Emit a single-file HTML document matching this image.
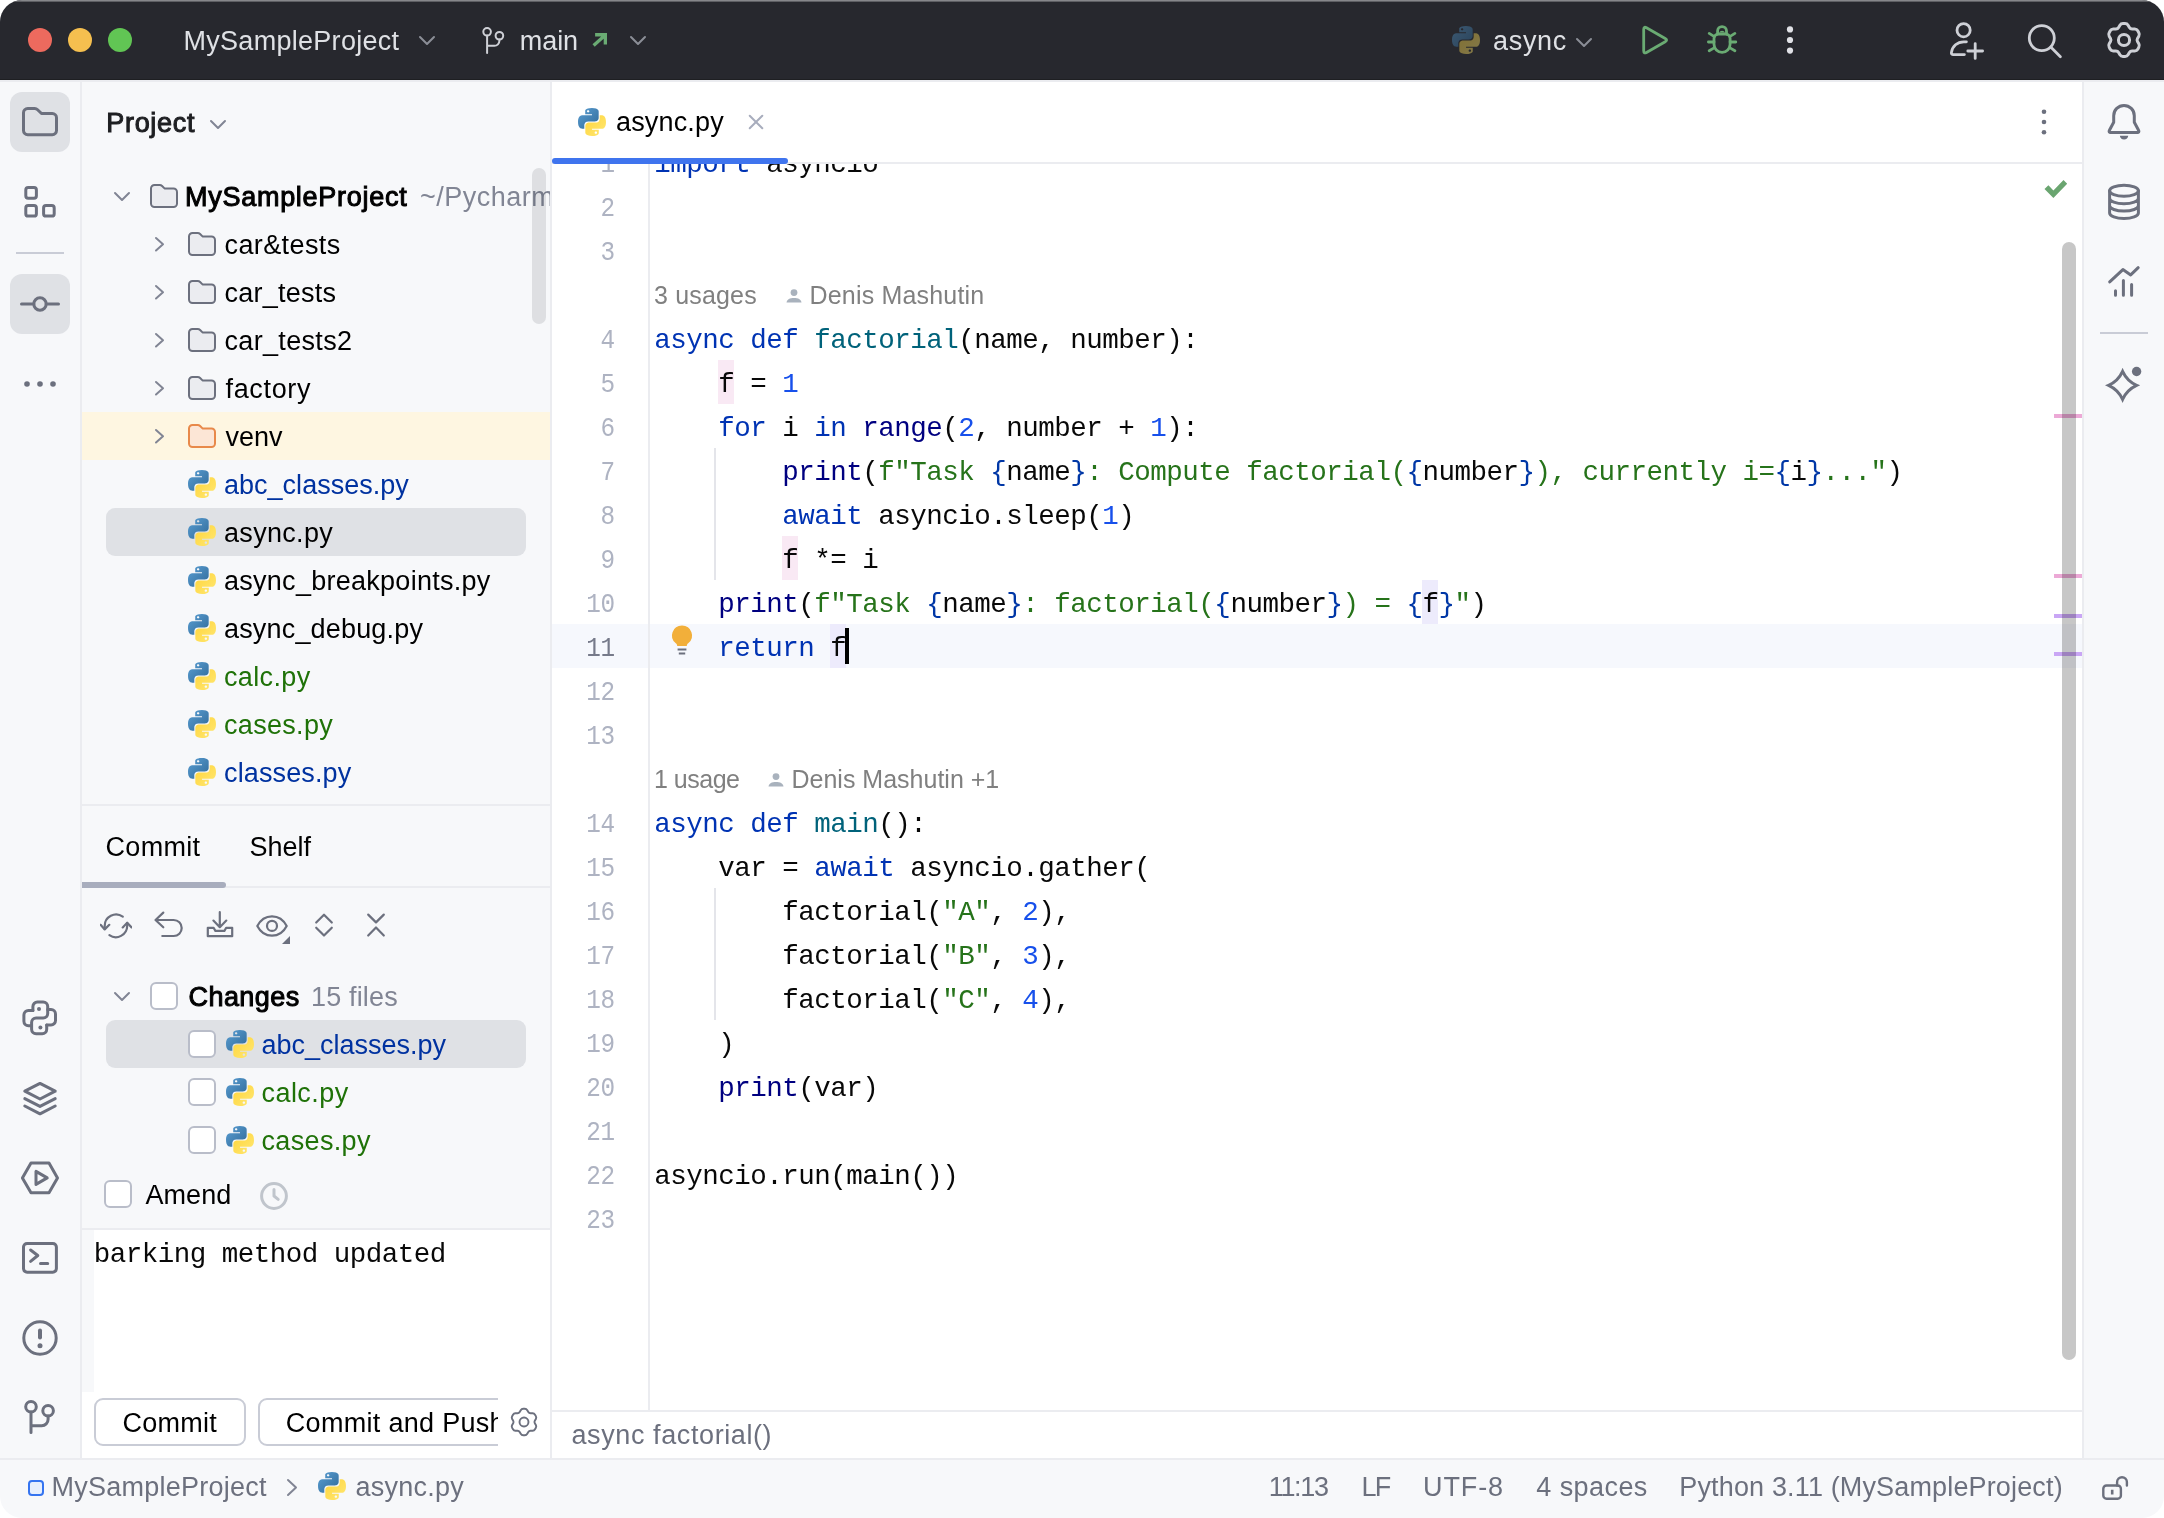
<!DOCTYPE html>
<html lang="en"><head><meta charset="utf-8"><title>MySampleProject – async.py</title>
<style>
html,body{margin:0;padding:0;background:#fff}
body{width:2164px;height:1518px;overflow:hidden;position:relative}
#win{position:absolute;left:0;top:0;width:2164px;height:1518px;border-radius:22px;overflow:hidden;background:#F7F8FA;will-change:transform}
.a{position:absolute}
.t{font-family:"Liberation Sans",sans-serif;white-space:pre;line-height:40px;height:40px}
.m{font-family:"Liberation Mono",monospace;white-space:pre;font-size:27.5px;letter-spacing:-0.5px;line-height:44px;height:44px;color:#080808}
.ln{font-family:"Liberation Mono",monospace;font-size:27px;letter-spacing:-0.2px;line-height:44px;height:44px;color:#AEB3C2;text-align:right;width:64px;transform:scaleX(0.9);transform-origin:100% 50%}
.k{color:#0033B3}.b{color:#000080}.f{color:#00627A}.n{color:#1750EB}.s{color:#26731A}.c{color:#0037A6}
.hw{background:#FCE8F4}.hr{background:#EDEBFC}
</style></head>
<body>
<svg width="0" height="0" style="position:absolute"><defs><linearGradient id="pyb" x1="0" y1="0" x2="1" y2="1"><stop offset="0" stop-color="#5A9FD4"/><stop offset="1" stop-color="#306998"/></linearGradient><linearGradient id="pyy" x1="0" y1="0" x2="1" y2="1"><stop offset="0" stop-color="#FFD43B"/><stop offset="1" stop-color="#FFE873"/></linearGradient></defs></svg>
<div id="win">
<div class="a" style="left:0px;top:0px;width:2164px;height:80px;background:#27282E;border-bottom:0"></div>
<div class="a" style="left:0px;top:0px;width:2164px;height:2px;background:linear-gradient(#9a9b9e,#4a4b50);"></div>
<div class="a" style="left:0px;top:79px;width:2164px;height:1px;background:#1E1F22;"></div>
<div class="a" style="left:28px;top:28px;width:24px;height:24px;background:#ED6A5E;border-radius:50%"></div>
<div class="a" style="left:68px;top:28px;width:24px;height:24px;background:#F5BF4F;border-radius:50%"></div>
<div class="a" style="left:108px;top:28px;width:24px;height:24px;background:#61C554;border-radius:50%"></div>
<div id="t_proj" class="a t" style="left:183.5px;top:21.2px;font-size:27px;color:#DFE1E5;letter-spacing:0.285px">MySampleProject</div>
<svg class="a" style="left:417.5px;top:35.0px" width="18" height="11" viewBox="-2 -2 18 11" fill="none" ><path d="M0 0L7.0 7L14 0" stroke="#8B8E97" stroke-width="2" stroke-linecap="round" stroke-linejoin="round"/></svg>
<svg class="a" style="left:478px;top:24px" width="32" height="36" viewBox="0 0 32 36" fill="none" ><circle cx="9.100" cy="7.800" r="3.800" stroke="#CED0D6" stroke-width="2" stroke-linecap="round" stroke-linejoin="round"/><circle cx="21.400" cy="11.750" r="3.800" stroke="#CED0D6" stroke-width="2" stroke-linecap="round" stroke-linejoin="round"/><path d="M9.100 11.600V29M9.100 21.850h7.300a5 5 0 0 0 5-5v-1.300" stroke="#CED0D6" stroke-width="2" stroke-linecap="round" stroke-linejoin="round"/></svg>
<div id="t_main" class="a t" style="left:519.8px;top:21.2px;font-size:27px;color:#DFE1E5;letter-spacing:-0.065px">main</div>
<svg class="a" style="left:590px;top:28px" width="20" height="20" viewBox="0 0 20 20" fill="none" ><path d="M3.600 17.400L14.200 7.900M5.100 6.750H15.350V16.500" stroke="#6AAB73" stroke-width="3.300" stroke-linejoin="miter"/></svg>
<svg class="a" style="left:629.0px;top:34.7px" width="18" height="11" viewBox="-2 -2 18 11" fill="none" ><path d="M0 0L7.0 7L14 0" stroke="#8B8E97" stroke-width="2" stroke-linecap="round" stroke-linejoin="round"/></svg>
<svg class="a" style="left:1450px;top:24px" width="32" height="32" viewBox="0 0 16 16" fill="none" opacity="0.42"><path fill="url(#pyb)" d="M7.93 1C4.39 1 4.61 2.53 4.61 2.53l.004 1.59h3.38v.48H3.27S1 4.34 1 7.9c0 3.57 1.98 3.44 1.98 3.44h1.18V9.68s-.06-1.98 1.95-1.98h3.35s1.88.03 1.88-1.82V2.83S11.63 1 7.93 1zM6.07 2.07c.34 0 .61.27.61.61s-.27.61-.61.61-.61-.27-.61-.61.27-.61.61-.61z"/><path fill="url(#pyy)" d="M8.07 15c3.54 0 3.32-1.53 3.32-1.53l-.004-1.59H8.01v-.48h4.72S15 11.66 15 8.1c0-3.57-1.98-3.44-1.98-3.44h-1.18v1.66s.06 1.98-1.95 1.98H6.54s-1.88-.03-1.88 1.82v3.05S4.37 15 8.07 15zm1.86-1.07c-.34 0-.61-.27-.61-.61s.27-.61.61-.61.61.27.61.61-.27.61-.61.61z"/></svg>
<div id="t_async" class="a t" style="left:1493.0px;top:21.2px;font-size:27px;color:#DFE1E5;letter-spacing:0.700px">async</div>
<svg class="a" style="left:1575.0px;top:36.5px" width="18" height="11" viewBox="-2 -2 18 11" fill="none" ><path d="M0 0L7.0 7L14 0" stroke="#8B8E97" stroke-width="2" stroke-linecap="round" stroke-linejoin="round"/></svg>
<svg class="a" style="left:1634px;top:20px" width="40" height="40" viewBox="0 0 20 20" fill="none" ><path d="M4.85 4.70Q4.85 3.10 6.24 3.89L15.61 9.26Q17.00 10.05 15.61 10.84L6.24 16.21Q4.85 17.00 4.85 15.40z" stroke="#6AAB73" stroke-width="1.4" stroke-linejoin="round"/></svg>
<svg class="a" style="left:1702px;top:20px" width="40" height="40" viewBox="0 0 20 20" fill="none" ><path d="M6 9.300a2.300 2.300 0 0 1 2.300-2.300h3.450a2.300 2.300 0 0 1 2.300 2.300v2.825a4.025 4.025 0 0 1-8.050 0z" stroke="#6AAB73" stroke-width="1.4" stroke-linecap="round" stroke-linejoin="round"/><path d="M7.800 7V5.500a2.225 2.225 0 0 1 4.450 0V7" stroke="#6AAB73" stroke-width="1.4" stroke-linecap="round" stroke-linejoin="round"/><path d="M8.600 6.300a1.500 1.300 0 0 1 2.850 0z" fill="#6AAB73"/><path d="M3.200 11H6M14.050 11h2.850M3.600 6.700l2.600 1.600M16.450 6.700l-2.600 1.600M3.600 15.400l2.700-1.600M16.450 15.400l-2.700-1.600" stroke="#6AAB73" stroke-width="1.4" stroke-linecap="round" stroke-linejoin="round"/></svg>
<svg class="a" style="left:1785px;top:20px" width="10" height="40" viewBox="0 0 10 40" fill="none" ><circle cx="5" cy="9.4" r="3.1" fill="#E0E1E6"/><circle cx="5" cy="20.0" r="3.1" fill="#E0E1E6"/><circle cx="5" cy="30.6" r="3.1" fill="#E0E1E6"/></svg>
<svg class="a" style="left:1947.2px;top:20px" width="40" height="40" viewBox="0 0 20 20" fill="none" ><circle cx="8.300" cy="5.100" r="3.300" stroke="#CED0D6" stroke-width="1.4" stroke-linecap="round" stroke-linejoin="round"/><path d="M9.700 10.900H8.400c-3.300 0-5.700 2.200-6.200 5.400-.1.600.3 1 .9 1h5.600" stroke="#CED0D6" stroke-width="1.4" stroke-linecap="round" stroke-linejoin="round"/><path d="M14.100 11.800v7.400M10.400 15.500h7.400" stroke="#CED0D6" stroke-width="1.4" stroke-linecap="round" stroke-linejoin="round"/></svg>
<svg class="a" style="left:2024px;top:20px" width="40" height="40" viewBox="0 0 20 20" fill="none" ><circle cx="8.900" cy="9.050" r="6.250" stroke="#CED0D6" stroke-width="1.4" stroke-linecap="round" stroke-linejoin="round"/><path d="M13.500 13.650l4.700 4.700" stroke="#CED0D6" stroke-width="1.4" stroke-linecap="round" stroke-linejoin="round"/></svg>
<svg class="a" style="left:2104.0px;top:20.0px" width="40" height="40" viewBox="0 0 20 20" fill="none" ><path d="M7.96 2.62Q8.47 1.75 9.47 1.75L10.53 1.75Q11.53 1.75 12.04 2.62L12.70 3.76Q13.15 4.54 14.05 4.54L15.38 4.54Q16.38 4.55 16.88 5.41L17.41 6.34Q17.91 7.20 17.41 8.07L16.75 9.22Q16.30 10.00 16.75 10.78L17.41 11.93Q17.91 12.80 17.41 13.66L16.88 14.59Q16.38 15.45 15.38 15.46L14.05 15.46Q13.15 15.46 12.70 16.24L12.04 17.38Q11.53 18.25 10.53 18.25L9.47 18.25Q8.47 18.25 7.96 17.38L7.30 16.24Q6.85 15.46 5.95 15.46L4.62 15.46Q3.62 15.45 3.12 14.59L2.59 13.66Q2.09 12.80 2.59 11.93L3.25 10.78Q3.70 10.00 3.25 9.22L2.59 8.07Q2.09 7.20 2.59 6.34L3.12 5.41Q3.62 4.55 4.62 4.54L5.95 4.54Q6.85 4.54 7.30 3.76z" stroke="#CED0D6" stroke-width="1.5" stroke-linecap="round" stroke-linejoin="round"/><circle cx="10" cy="10" r="2.800" stroke="#CED0D6" stroke-width="1.5" stroke-linecap="round" stroke-linejoin="round"/></svg>
<div class="a" style="left:0px;top:80px;width:2164px;height:2px;background:#EBECF0;"></div>
<div class="a" style="left:80px;top:82px;width:2px;height:1376px;background:#EBECF0;"></div>
<div class="a" style="left:10px;top:92px;width:60px;height:60px;background:#DFE1E5;border-radius:12px"></div>
<svg class="a" style="left:20px;top:102px" width="40" height="40" viewBox="0 0 20 20" fill="none" ><path d="M1.75 5.35a2.1 2.1 0 0 1 2.1-2.1h3.5a2.1 2.1 0 0 1 1.45.6l1.95 1.9h5.4a2.1 2.1 0 0 1 2.1 2.1v6.4a2.1 2.1 0 0 1-2.1 2.1H3.85a2.1 2.1 0 0 1-2.1-2.1z" stroke="#6C707E" stroke-width="1.5" stroke-linecap="round" stroke-linejoin="round"/></svg>
<svg class="a" style="left:20px;top:182px" width="40" height="40" viewBox="0 0 20 20" fill="none" ><rect x="2.9" y="2.8" width="5.3" height="5.3" rx="1.2" stroke="#6C707E" stroke-width="1.5" stroke-linecap="round" stroke-linejoin="round"/><rect x="2.9" y="11.750" width="5.3" height="5.3" rx="1.2" stroke="#6C707E" stroke-width="1.5" stroke-linecap="round" stroke-linejoin="round"/><rect x="11.8" y="11.750" width="5.3" height="5.3" rx="1.2" stroke="#6C707E" stroke-width="1.5" stroke-linecap="round" stroke-linejoin="round"/></svg>
<div class="a" style="left:16px;top:252px;width:48px;height:2px;background:#C9CCD6;"></div>
<div class="a" style="left:10px;top:274px;width:60px;height:60px;background:#DFE1E5;border-radius:12px"></div>
<svg class="a" style="left:20px;top:284px" width="40" height="40" viewBox="0 0 20 20" fill="none" ><circle cx="10" cy="10" r="3.1" stroke="#6C707E" stroke-width="1.5" stroke-linecap="round" stroke-linejoin="round"/><path d="M0.75 10H6.9M13.1 10H19.25" stroke="#6C707E" stroke-width="1.5" stroke-linecap="round" stroke-linejoin="round"/></svg>
<svg class="a" style="left:20px;top:364px" width="40" height="40" viewBox="0 0 20 20" fill="none" ><circle cx="3.5" cy="10" r="1.4" fill="#6C707E"/><circle cx="10" cy="10" r="1.4" fill="#6C707E"/><circle cx="16.5" cy="10" r="1.4" fill="#6C707E"/></svg>
<svg class="a" style="left:20px;top:998px" width="40" height="40" viewBox="0 0 20 20" fill="none" ><path d="M6.450 6.200V4.300a2.250 2.250 0 0 1 2.250-2.250h2.900a2.250 2.250 0 0 1 2.250 2.250v3.450a2.250 2.250 0 0 1-2.250 2.250H8.050a2.250 2.250 0 0 0-2.250 2.250v3.350a2.250 2.250 0 0 0 2.250 2.250h3.050a2.250 2.250 0 0 0 2.250-2.250v-2.150" stroke="#6C707E" stroke-width="1.5" stroke-linecap="round" stroke-linejoin="round"/><path d="M6.450 6.200H4.200a2.250 2.250 0 0 0-2.250 2.250v3.200a2.250 2.250 0 0 0 2.250 2.250h1.600M13.850 5.750h1.650a2.250 2.250 0 0 1 2.250 2.250v3.200a2.250 2.250 0 0 1-2.250 2.250h-2.150" stroke="#6C707E" stroke-width="1.5" stroke-linecap="round" stroke-linejoin="round"/><circle cx="9.500" cy="5.450" r="1" fill="#6C707E"/><circle cx="10.200" cy="14.750" r="1" fill="#6C707E"/></svg>
<svg class="a" style="left:20px;top:1078px" width="40" height="40" viewBox="0 0 20 20" fill="none" ><path d="M10 2.7L17.6 6.6 10 10.5 2.4 6.6z" stroke="#6C707E" stroke-width="1.5" stroke-linecap="round" stroke-linejoin="round"/><path d="M2.4 10.3L10 14.2l7.600-3.900M2.4 14.000L10 17.900l7.600-3.900" stroke="#6C707E" stroke-width="1.5" stroke-linecap="round" stroke-linejoin="round"/></svg>
<svg class="a" style="left:20px;top:1158px" width="40" height="40" viewBox="0 0 20 20" fill="none" ><path d="M5.500 2.500h9l4.250 7.450-4.250 7.400h-9L1.200 9.950z" stroke="#6C707E" stroke-width="1.5" stroke-linecap="round" stroke-linejoin="round"/><path d="M8 6.700v6.500l5.600-3.250z" stroke="#6C707E" stroke-width="1.5" stroke-linecap="round" stroke-linejoin="round"/></svg>
<svg class="a" style="left:20px;top:1238px" width="40" height="40" viewBox="0 0 20 20" fill="none" ><rect x="1.750" y="2.750" width="16.450" height="14.350" rx="1.800" stroke="#6C707E" stroke-width="1.5" stroke-linecap="round" stroke-linejoin="round"/><path d="M5.300 6l3.600 2.750-3.600 2.900M10.250 12.700h3.600" stroke="#6C707E" stroke-width="1.5" stroke-linecap="round" stroke-linejoin="round"/></svg>
<svg class="a" style="left:20px;top:1318px" width="40" height="40" viewBox="0 0 20 20" fill="none" ><circle cx="10" cy="10" r="8.100" stroke="#6C707E" stroke-width="1.5" stroke-linecap="round" stroke-linejoin="round"/><path d="M10 6.200v3.550" stroke="#6C707E" stroke-width="2" stroke-linecap="round" stroke-linejoin="round"/><circle cx="10" cy="13.900" r="1.250" fill="#6C707E"/></svg>
<svg class="a" style="left:20px;top:1398px" width="40" height="40" viewBox="0 0 20 20" fill="none" ><circle cx="5.500" cy="4.400" r="2.650" stroke="#6C707E" stroke-width="1.5" stroke-linecap="round" stroke-linejoin="round"/><circle cx="14.050" cy="6.350" r="2.650" stroke="#6C707E" stroke-width="1.5" stroke-linecap="round" stroke-linejoin="round"/><path d="M5.500 7.050V17.250M5.500 13.850h5.350a3.200 3.200 0 0 0 3.200-3.200V9" stroke="#6C707E" stroke-width="1.5" stroke-linecap="round" stroke-linejoin="round"/></svg>
<div class="a" style="left:2082px;top:82px;width:2px;height:1376px;background:#EBECF0;"></div>
<svg class="a" style="left:2104px;top:102px" width="40" height="40" viewBox="0 0 20 20" fill="none" ><path d="M4.850 6.850a5.150 5.150 0 0 1 10.300 0v3.300l2.200 4.100a.700.700 0 0 1-.600 1.050H3.250a.700.700 0 0 1-.600-1.050l2.200-4.100z" stroke="#6C707E" stroke-width="1.5" stroke-linecap="round" stroke-linejoin="round"/><path d="M7.900 16.900h4.250a2.150 2.150 0 0 1-4.250 0z" fill="#6C707E"/></svg>
<svg class="a" style="left:2104px;top:182px" width="40" height="40" viewBox="0 0 20 20" fill="none" ><ellipse cx="10" cy="4.400" rx="7.200" ry="2.750" stroke="#6C707E" stroke-width="1.5" stroke-linecap="round" stroke-linejoin="round"/><path d="M2.800 4.400v11.100c0 1.520 3.220 2.750 7.200 2.750s7.200-1.230 7.200-2.750V4.400M2.800 8.100c0 1.520 3.220 2.750 7.200 2.750s7.200-1.230 7.200-2.750M2.800 11.800c0 1.520 3.220 2.750 7.200 2.750s7.200-1.230 7.200-2.750" stroke="#6C707E" stroke-width="1.5" stroke-linecap="round" stroke-linejoin="round"/></svg>
<svg class="a" style="left:2104px;top:262px" width="40" height="40" viewBox="0 0 20 20" fill="none" ><path d="M2.850 9.950L9.450 3.800l3.900 2.650 3.750-3.600" stroke="#6C707E" stroke-width="1.5" stroke-linecap="round" stroke-linejoin="round"/><path d="M5.750 14.350v2.300M9.700 9.300v7.350M13.800 11.250v5.400" stroke="#6C707E" stroke-width="1.5" stroke-linecap="round" stroke-linejoin="round"/></svg>
<div class="a" style="left:2100px;top:332px;width:48px;height:2px;background:#C9CCD6;"></div>
<svg class="a" style="left:2103px;top:365px" width="40" height="40" viewBox="0 0 20 20" fill="none" ><path d="M9.800 3.150Q12 7.950 16.800 10.150Q12 12.350 9.800 17.150Q7.600 12.350 2.800 10.150Q7.600 7.950 9.800 3.150z" stroke="#6C707E" stroke-width="1.5" stroke-linejoin="miter" stroke-miterlimit="10"/><circle cx="16.800" cy="3.250" r="2.350" fill="#6C707E"/></svg>
<div class="a" style="left:0px;top:1458px;width:2164px;height:2px;background:#EBECF0;"></div>
<div class="a" style="left:28px;top:1480px;width:12px;height:12px;border:2px solid #3574F0;border-radius:4px;background:#E7EFFD"></div>
<div id="s_proj" class="a t" style="left:51.5px;top:1466.9px;font-size:27px;color:#6C707E;letter-spacing:0.240px">MySampleProject</div>
<svg class="a" style="left:285.5px;top:1477.5px" width="12" height="19" viewBox="-2 -2 12 19" fill="none" ><path d="M0 0L8 7.5L0 15" stroke="#818594" stroke-width="2" stroke-linecap="round" stroke-linejoin="round"/></svg>
<svg class="a" style="left:316px;top:1470px" width="32" height="32" viewBox="0 0 16 16" fill="none" ><path fill="url(#pyb)" d="M7.93 1C4.39 1 4.61 2.53 4.61 2.53l.004 1.59h3.38v.48H3.27S1 4.34 1 7.9c0 3.57 1.98 3.44 1.98 3.44h1.18V9.68s-.06-1.98 1.95-1.98h3.35s1.88.03 1.88-1.82V2.83S11.63 1 7.93 1zM6.07 2.07c.34 0 .61.27.61.61s-.27.61-.61.61-.61-.27-.61-.61.27-.61.61-.61z"/><path fill="url(#pyy)" d="M8.07 15c3.54 0 3.32-1.53 3.32-1.53l-.004-1.59H8.01v-.48h4.72S15 11.66 15 8.1c0-3.57-1.98-3.44-1.98-3.44h-1.18v1.66s.06 1.98-1.95 1.98H6.54s-1.88-.03-1.88 1.82v3.05S4.37 15 8.07 15zm1.86-1.07c-.34 0-.61-.27-.61-.61s.27-.61.61-.61.61.27.61.61-.27.61-.61.61z"/></svg>
<div id="s_file" class="a t" style="left:355.5px;top:1466.9px;font-size:27px;color:#6C707E;letter-spacing:0.226px">async.py</div>
<div id="s_pos" class="a t" style="left:1268.7px;top:1466.9px;font-size:27px;color:#6C707E;letter-spacing:-1.300px">11:13</div>
<div id="s_lf" class="a t" style="left:1361.4px;top:1466.9px;font-size:27px;color:#6C707E;letter-spacing:-1.600px">LF</div>
<div id="s_enc" class="a t" style="left:1423.1px;top:1466.9px;font-size:27px;color:#6C707E;letter-spacing:0.850px">UTF-8</div>
<div id="s_ind" class="a t" style="left:1536.3px;top:1466.9px;font-size:27px;color:#6C707E;letter-spacing:0.428px">4 spaces</div>
<div id="s_py" class="a t" style="left:1679.3px;top:1466.9px;font-size:27px;color:#6C707E;letter-spacing:0.149px">Python 3.11 (MySampleProject)</div>
<svg class="a" style="left:2100px;top:1470px" width="32" height="32" viewBox="0 0 16 16" fill="none" ><rect x="1.650" y="7.750" width="8.800" height="6.600" rx="1.600" stroke="#6C707E" stroke-width="1.200"/><path d="M8.550 7.750V6.050a2.450 2.450 0 0 1 4.900 0V7.800" stroke="#6C707E" stroke-width="1.200" stroke-linecap="round"/><path d="M6.100 9.900v2.300" stroke="#6C707E" stroke-width="1.300"/></svg>
<div class="a" style="left:550px;top:82px;width:2px;height:1376px;background:#EBECF0;"></div>
<div id="p_title" class="a t" style="left:106.3px;top:102.9px;font-size:27px;color:#1E1F22;letter-spacing:0.683px;-webkit-text-stroke:1px currentColor">Project</div>
<svg class="a" style="left:209.0px;top:118.5px" width="18" height="11" viewBox="-2 -2 18 11" fill="none" ><path d="M0 0L7.0 7L14 0" stroke="#818594" stroke-width="2" stroke-linecap="round" stroke-linejoin="round"/></svg>
<div class="a" style="left:82px;top:412px;width:468px;height:48px;background:#FEF6E1;"></div>
<div class="a" style="left:106px;top:508px;width:420px;height:48px;background:#DFE1E5;border-radius:9px"></div>
<svg class="a" style="left:113.0px;top:191.0px" width="18" height="11" viewBox="-2 -2 18 11" fill="none" ><path d="M0 0L7.0 7L14 0" stroke="#818594" stroke-width="2" stroke-linecap="round" stroke-linejoin="round"/></svg>
<svg class="a" style="left:150px;top:184px" width="28" height="24" viewBox="0 0 28 24" fill="none" ><path d="M1 4.5A3.5 3.5 0 0 1 4.5 1h5.2a3.5 3.5 0 0 1 2.4 1l2.4 2.4h9A3.5 3.5 0 0 1 27 7.9v11.6a3.5 3.5 0 0 1-3.5 3.5h-19A3.5 3.5 0 0 1 1 19.5z" fill="#EBECF0" stroke="#6C707E" stroke-width="2" stroke-linejoin="round"/></svg>
<div id="p_root" class="a t" style="left:185.0px;top:176.6px;font-size:27px;color:#000;letter-spacing:0.725px;-webkit-text-stroke:1px currentColor">MySampleProject</div>
<div id="p_path" class="a t" style="left:419.9px;top:176.6px;font-size:27px;color:#818594;letter-spacing:0.500px;width:130.2px;overflow:hidden">~/PycharmProjects</div>
<svg class="a" style="left:154.0px;top:236.25px" width="11" height="16.5" viewBox="-2 -2 11 16.5" fill="none" ><path d="M0 0L7 6.25L0 12.5" stroke="#818594" stroke-width="2" stroke-linecap="round" stroke-linejoin="round"/></svg>
<svg class="a" style="left:188px;top:232px" width="28" height="24" viewBox="0 0 28 24" fill="none" ><path d="M1 4.5A3.5 3.5 0 0 1 4.5 1h5.2a3.5 3.5 0 0 1 2.4 1l2.4 2.4h9A3.5 3.5 0 0 1 27 7.9v11.6a3.5 3.5 0 0 1-3.5 3.5h-19A3.5 3.5 0 0 1 1 19.5z" fill="#EBECF0" stroke="#6C707E" stroke-width="2" stroke-linejoin="round"/></svg>
<div id="p_d1" class="a t" style="left:224.5px;top:224.6px;font-size:27px;color:#000;letter-spacing:0.400px">car&amp;tests</div>
<svg class="a" style="left:154.0px;top:284.25px" width="11" height="16.5" viewBox="-2 -2 11 16.5" fill="none" ><path d="M0 0L7 6.25L0 12.5" stroke="#818594" stroke-width="2" stroke-linecap="round" stroke-linejoin="round"/></svg>
<svg class="a" style="left:188px;top:280px" width="28" height="24" viewBox="0 0 28 24" fill="none" ><path d="M1 4.5A3.5 3.5 0 0 1 4.5 1h5.2a3.5 3.5 0 0 1 2.4 1l2.4 2.4h9A3.5 3.5 0 0 1 27 7.9v11.6a3.5 3.5 0 0 1-3.5 3.5h-19A3.5 3.5 0 0 1 1 19.5z" fill="#EBECF0" stroke="#6C707E" stroke-width="2" stroke-linejoin="round"/></svg>
<div id="p_d2" class="a t" style="left:224.5px;top:272.6px;font-size:27px;color:#000;letter-spacing:0.250px">car_tests</div>
<svg class="a" style="left:154.0px;top:332.25px" width="11" height="16.5" viewBox="-2 -2 11 16.5" fill="none" ><path d="M0 0L7 6.25L0 12.5" stroke="#818594" stroke-width="2" stroke-linecap="round" stroke-linejoin="round"/></svg>
<svg class="a" style="left:188px;top:328px" width="28" height="24" viewBox="0 0 28 24" fill="none" ><path d="M1 4.5A3.5 3.5 0 0 1 4.5 1h5.2a3.5 3.5 0 0 1 2.4 1l2.4 2.4h9A3.5 3.5 0 0 1 27 7.9v11.6a3.5 3.5 0 0 1-3.5 3.5h-19A3.5 3.5 0 0 1 1 19.5z" fill="#EBECF0" stroke="#6C707E" stroke-width="2" stroke-linejoin="round"/></svg>
<div id="p_d3" class="a t" style="left:224.5px;top:320.6px;font-size:27px;color:#000;letter-spacing:0.333px">car_tests2</div>
<svg class="a" style="left:154.0px;top:380.25px" width="11" height="16.5" viewBox="-2 -2 11 16.5" fill="none" ><path d="M0 0L7 6.25L0 12.5" stroke="#818594" stroke-width="2" stroke-linecap="round" stroke-linejoin="round"/></svg>
<svg class="a" style="left:188px;top:376px" width="28" height="24" viewBox="0 0 28 24" fill="none" ><path d="M1 4.5A3.5 3.5 0 0 1 4.5 1h5.2a3.5 3.5 0 0 1 2.4 1l2.4 2.4h9A3.5 3.5 0 0 1 27 7.9v11.6a3.5 3.5 0 0 1-3.5 3.5h-19A3.5 3.5 0 0 1 1 19.5z" fill="#EBECF0" stroke="#6C707E" stroke-width="2" stroke-linejoin="round"/></svg>
<div id="p_d4" class="a t" style="left:225.5px;top:368.6px;font-size:27px;color:#000;letter-spacing:0.667px">factory</div>
<svg class="a" style="left:154.0px;top:428.25px" width="11" height="16.5" viewBox="-2 -2 11 16.5" fill="none" ><path d="M0 0L7 6.25L0 12.5" stroke="#818594" stroke-width="2" stroke-linecap="round" stroke-linejoin="round"/></svg>
<svg class="a" style="left:188px;top:424px" width="28" height="24" viewBox="0 0 28 24" fill="none" ><path d="M1 4.5A3.5 3.5 0 0 1 4.5 1h5.2a3.5 3.5 0 0 1 2.4 1l2.4 2.4h9A3.5 3.5 0 0 1 27 7.9v11.6a3.5 3.5 0 0 1-3.5 3.5h-19A3.5 3.5 0 0 1 1 19.5z" fill="#FCE6D6" stroke="#E8894A" stroke-width="2" stroke-linejoin="round"/></svg>
<div id="p_d5" class="a t" style="left:225.5px;top:416.6px;font-size:27px;color:#000;letter-spacing:0.000px">venv</div>
<svg class="a" style="left:186px;top:468px" width="32" height="32" viewBox="0 0 16 16" fill="none" ><path fill="url(#pyb)" d="M7.93 1C4.39 1 4.61 2.53 4.61 2.53l.004 1.59h3.38v.48H3.27S1 4.34 1 7.9c0 3.57 1.98 3.44 1.98 3.44h1.18V9.68s-.06-1.98 1.95-1.98h3.35s1.88.03 1.88-1.82V2.83S11.63 1 7.93 1zM6.07 2.07c.34 0 .61.27.61.61s-.27.61-.61.61-.61-.27-.61-.61.27-.61.61-.61z"/><path fill="url(#pyy)" d="M8.07 15c3.54 0 3.32-1.53 3.32-1.53l-.004-1.59H8.01v-.48h4.72S15 11.66 15 8.1c0-3.57-1.98-3.44-1.98-3.44h-1.18v1.66s.06 1.98-1.95 1.98H6.54s-1.88-.03-1.88 1.82v3.05S4.37 15 8.07 15zm1.86-1.07c-.34 0-.61-.27-.61-.61s.27-.61.61-.61.61.27.61.61-.27.61-.61.61z"/></svg>
<div id="p_f6" class="a t" style="left:224.0px;top:464.6px;font-size:27px;color:#0032A0;letter-spacing:0.014px">abc_classes.py</div>
<svg class="a" style="left:186px;top:516px" width="32" height="32" viewBox="0 0 16 16" fill="none" ><path fill="url(#pyb)" d="M7.93 1C4.39 1 4.61 2.53 4.61 2.53l.004 1.59h3.38v.48H3.27S1 4.34 1 7.9c0 3.57 1.98 3.44 1.98 3.44h1.18V9.68s-.06-1.98 1.95-1.98h3.35s1.88.03 1.88-1.82V2.83S11.63 1 7.93 1zM6.07 2.07c.34 0 .61.27.61.61s-.27.61-.61.61-.61-.27-.61-.61.27-.61.61-.61z"/><path fill="url(#pyy)" d="M8.07 15c3.54 0 3.32-1.53 3.32-1.53l-.004-1.59H8.01v-.48h4.72S15 11.66 15 8.1c0-3.57-1.98-3.44-1.98-3.44h-1.18v1.66s.06 1.98-1.95 1.98H6.54s-1.88-.03-1.88 1.82v3.05S4.37 15 8.07 15zm1.86-1.07c-.34 0-.61-.27-.61-.61s.27-.61.61-.61.61.27.61.61-.27.61-.61.61z"/></svg>
<div id="p_f7" class="a t" style="left:224.0px;top:512.6px;font-size:27px;color:#000;letter-spacing:0.311px">async.py</div>
<svg class="a" style="left:186px;top:564px" width="32" height="32" viewBox="0 0 16 16" fill="none" ><path fill="url(#pyb)" d="M7.93 1C4.39 1 4.61 2.53 4.61 2.53l.004 1.59h3.38v.48H3.27S1 4.34 1 7.9c0 3.57 1.98 3.44 1.98 3.44h1.18V9.68s-.06-1.98 1.95-1.98h3.35s1.88.03 1.88-1.82V2.83S11.63 1 7.93 1zM6.07 2.07c.34 0 .61.27.61.61s-.27.61-.61.61-.61-.27-.61-.61.27-.61.61-.61z"/><path fill="url(#pyy)" d="M8.07 15c3.54 0 3.32-1.53 3.32-1.53l-.004-1.59H8.01v-.48h4.72S15 11.66 15 8.1c0-3.57-1.98-3.44-1.98-3.44h-1.18v1.66s.06 1.98-1.95 1.98H6.54s-1.88-.03-1.88 1.82v3.05S4.37 15 8.07 15zm1.86-1.07c-.34 0-.61-.27-.61-.61s.27-.61.61-.61.61.27.61.61-.27.61-.61.61z"/></svg>
<div id="p_f8" class="a t" style="left:224.0px;top:560.6px;font-size:27px;color:#000;letter-spacing:0.271px">async_breakpoints.py</div>
<svg class="a" style="left:186px;top:612px" width="32" height="32" viewBox="0 0 16 16" fill="none" ><path fill="url(#pyb)" d="M7.93 1C4.39 1 4.61 2.53 4.61 2.53l.004 1.59h3.38v.48H3.27S1 4.34 1 7.9c0 3.57 1.98 3.44 1.98 3.44h1.18V9.68s-.06-1.98 1.95-1.98h3.35s1.88.03 1.88-1.82V2.83S11.63 1 7.93 1zM6.07 2.07c.34 0 .61.27.61.61s-.27.61-.61.61-.61-.27-.61-.61.27-.61.61-.61z"/><path fill="url(#pyy)" d="M8.07 15c3.54 0 3.32-1.53 3.32-1.53l-.004-1.59H8.01v-.48h4.72S15 11.66 15 8.1c0-3.57-1.98-3.44-1.98-3.44h-1.18v1.66s.06 1.98-1.95 1.98H6.54s-1.88-.03-1.88 1.82v3.05S4.37 15 8.07 15zm1.86-1.07c-.34 0-.61-.27-.61-.61s.27-.61.61-.61.61.27.61.61-.27.61-.61.61z"/></svg>
<div id="p_f9" class="a t" style="left:224.0px;top:608.6px;font-size:27px;color:#000;letter-spacing:0.174px">async_debug.py</div>
<svg class="a" style="left:186px;top:660px" width="32" height="32" viewBox="0 0 16 16" fill="none" ><path fill="url(#pyb)" d="M7.93 1C4.39 1 4.61 2.53 4.61 2.53l.004 1.59h3.38v.48H3.27S1 4.34 1 7.9c0 3.57 1.98 3.44 1.98 3.44h1.18V9.68s-.06-1.98 1.95-1.98h3.35s1.88.03 1.88-1.82V2.83S11.63 1 7.93 1zM6.07 2.07c.34 0 .61.27.61.61s-.27.61-.61.61-.61-.27-.61-.61.27-.61.61-.61z"/><path fill="url(#pyy)" d="M8.07 15c3.54 0 3.32-1.53 3.32-1.53l-.004-1.59H8.01v-.48h4.72S15 11.66 15 8.1c0-3.57-1.98-3.44-1.98-3.44h-1.18v1.66s.06 1.98-1.95 1.98H6.54s-1.88-.03-1.88 1.82v3.05S4.37 15 8.07 15zm1.86-1.07c-.34 0-.61-.27-.61-.61s.27-.61.61-.61.61.27.61.61-.27.61-.61.61z"/></svg>
<div id="p_f10" class="a t" style="left:224.0px;top:656.6px;font-size:27px;color:#1F7208;letter-spacing:0.367px">calc.py</div>
<svg class="a" style="left:186px;top:708px" width="32" height="32" viewBox="0 0 16 16" fill="none" ><path fill="url(#pyb)" d="M7.93 1C4.39 1 4.61 2.53 4.61 2.53l.004 1.59h3.38v.48H3.27S1 4.34 1 7.9c0 3.57 1.98 3.44 1.98 3.44h1.18V9.68s-.06-1.98 1.95-1.98h3.35s1.88.03 1.88-1.82V2.83S11.63 1 7.93 1zM6.07 2.07c.34 0 .61.27.61.61s-.27.61-.61.61-.61-.27-.61-.61.27-.61.61-.61z"/><path fill="url(#pyy)" d="M8.07 15c3.54 0 3.32-1.53 3.32-1.53l-.004-1.59H8.01v-.48h4.72S15 11.66 15 8.1c0-3.57-1.98-3.44-1.98-3.44h-1.18v1.66s.06 1.98-1.95 1.98H6.54s-1.88-.03-1.88 1.82v3.05S4.37 15 8.07 15zm1.86-1.07c-.34 0-.61-.27-.61-.61s.27-.61.61-.61.61.27.61.61-.27.61-.61.61z"/></svg>
<div id="p_f11" class="a t" style="left:224.0px;top:704.6px;font-size:27px;color:#1F7208;letter-spacing:0.311px">cases.py</div>
<svg class="a" style="left:186px;top:756px" width="32" height="32" viewBox="0 0 16 16" fill="none" ><path fill="url(#pyb)" d="M7.93 1C4.39 1 4.61 2.53 4.61 2.53l.004 1.59h3.38v.48H3.27S1 4.34 1 7.9c0 3.57 1.98 3.44 1.98 3.44h1.18V9.68s-.06-1.98 1.95-1.98h3.35s1.88.03 1.88-1.82V2.83S11.63 1 7.93 1zM6.07 2.07c.34 0 .61.27.61.61s-.27.61-.61.61-.61-.27-.61-.61.27-.61.61-.61z"/><path fill="url(#pyy)" d="M8.07 15c3.54 0 3.32-1.53 3.32-1.53l-.004-1.59H8.01v-.48h4.72S15 11.66 15 8.1c0-3.57-1.98-3.44-1.98-3.44h-1.18v1.66s.06 1.98-1.95 1.98H6.54s-1.88-.03-1.88 1.82v3.05S4.37 15 8.07 15zm1.86-1.07c-.34 0-.61-.27-.61-.61s.27-.61.61-.61.61.27.61.61-.27.61-.61.61z"/></svg>
<div id="p_f12" class="a t" style="left:224.0px;top:752.6px;font-size:27px;color:#0032A0;letter-spacing:0.136px">classes.py</div>
<div class="a" style="left:532px;top:168px;width:14px;height:156px;background:rgba(30,32,40,0.115);border-radius:7px"></div>
<div class="a" style="left:82px;top:804px;width:468px;height:2px;background:#EBECF0;"></div>
<div id="c_tab1" class="a t" style="left:105.5px;top:827.2px;font-size:27px;color:#000;letter-spacing:0.320px">Commit</div>
<div id="c_tab2" class="a t" style="left:249.5px;top:827.2px;font-size:27px;color:#000;letter-spacing:0.000px">Shelf</div>
<div class="a" style="left:82px;top:886px;width:468px;height:2px;background:#EBECF0;"></div>
<div class="a" style="left:82px;top:882px;width:144px;height:6px;background:#A8ADBD;border-radius:0 3px 3px 0"></div>
<svg class="a" style="left:100px;top:910px" width="32" height="32" viewBox="0 0 16 16" fill="none" ><path d="M11.400 3.300A5.700 5.700 0 0 0 2.350 8v1.500M4.700 12.600A5.700 5.700 0 0 0 13.600 8V6.500" stroke="#6C707E" stroke-width="1.1" stroke-linecap="round" stroke-linejoin="round"/><path d="M.300 7.400l2.050 2.300 2.300-2.300M11.350 8.700l2.250-2.350 2.200 2.350" stroke="#6C707E" stroke-width="1.1" stroke-linecap="round" stroke-linejoin="round"/></svg>
<svg class="a" style="left:153px;top:910px" width="32" height="32" viewBox="0 0 16 16" fill="none" ><path d="M5.150 1.300L1.250 5l3.900 3.650" stroke="#6C707E" stroke-width="1.1" stroke-linecap="round" stroke-linejoin="round"/><path d="M1.600 5h8.750a4 4 0 0 1 0 8H4.650" stroke="#6C707E" stroke-width="1.1" stroke-linecap="round" stroke-linejoin="round"/></svg>
<svg class="a" style="left:204px;top:910px" width="32" height="32" viewBox="0 0 16 16" fill="none" ><path d="M7.900 1.100v7.400M4.700 5.300l3.200 3.300 3.250-3.300" stroke="#6C707E" stroke-width="1.1" stroke-linecap="round" stroke-linejoin="round"/><path d="M1.900 8.900h2.900l.9 1.550h4.500l.9-1.550h3v4.200H1.900z" stroke="#6C707E" stroke-width="1.1" stroke-linecap="round" stroke-linejoin="round"/></svg>
<svg class="a" style="left:256px;top:910px" width="32" height="32" viewBox="0 0 16 16" fill="none" ><path d="M.650 8C2.300 4.800 5 3.150 8 3.150S13.700 4.800 15.350 8C13.700 11.200 11 12.850 8 12.850S2.300 11.200.650 8z" stroke="#6C707E" stroke-width="1.1" stroke-linecap="round" stroke-linejoin="round"/><circle cx="8" cy="7.950" r="2.500" stroke="#6C707E" stroke-width="1.1" stroke-linecap="round" stroke-linejoin="round"/></svg>
<svg class="a" style="left:282px;top:936px" width="8" height="8" viewBox="0 0 8 8" fill="none" ><path d="M8 0v8H0z" fill="#6C707E"/></svg>
<svg class="a" style="left:308px;top:910px" width="32" height="32" viewBox="0 0 16 16" fill="none" ><path d="M4.100 6.250L8 2.350l3.900 3.900M4.100 8.850L8 12.750l3.900-3.900" stroke="#6C707E" stroke-width="1.1" stroke-linecap="round" stroke-linejoin="round"/></svg>
<svg class="a" style="left:360px;top:910px" width="32" height="32" viewBox="0 0 16 16" fill="none" ><path d="M4.100 2.300L8 6.200l3.900-3.900M4.100 12.750L8 8.750l3.900 4" stroke="#6C707E" stroke-width="1.1" stroke-linecap="round" stroke-linejoin="round"/></svg>
<div class="a" style="left:106px;top:1020px;width:420px;height:48px;background:#DFE1E5;border-radius:9px"></div>
<svg class="a" style="left:113.0px;top:991.0px" width="18" height="11" viewBox="-2 -2 18 11" fill="none" ><path d="M0 0L7.0 7L14 0" stroke="#818594" stroke-width="2" stroke-linecap="round" stroke-linejoin="round"/></svg>
<div class="a" style="left:150px;top:982px;width:24px;height:24px;border:2px solid #B9BDC9;border-radius:6px;background:#fff"></div>
<div id="c_changes" class="a t" style="left:188.5px;top:976.6px;font-size:27px;color:#000;letter-spacing:0.436px;-webkit-text-stroke:1px currentColor">Changes</div>
<div id="c_count" class="a t" style="left:311.0px;top:976.6px;font-size:27px;color:#818594;letter-spacing:0.168px">15 files</div>
<div class="a" style="left:188px;top:1030px;width:24px;height:24px;border:2px solid #B9BDC9;border-radius:6px;background:#fff"></div>
<svg class="a" style="left:224px;top:1028px" width="32" height="32" viewBox="0 0 16 16" fill="none" ><path fill="url(#pyb)" d="M7.93 1C4.39 1 4.61 2.53 4.61 2.53l.004 1.59h3.38v.48H3.27S1 4.34 1 7.9c0 3.57 1.98 3.44 1.98 3.44h1.18V9.68s-.06-1.98 1.95-1.98h3.35s1.88.03 1.88-1.82V2.83S11.63 1 7.93 1zM6.07 2.07c.34 0 .61.27.61.61s-.27.61-.61.61-.61-.27-.61-.61.27-.61.61-.61z"/><path fill="url(#pyy)" d="M8.07 15c3.54 0 3.32-1.53 3.32-1.53l-.004-1.59H8.01v-.48h4.72S15 11.66 15 8.1c0-3.57-1.98-3.44-1.98-3.44h-1.18v1.66s.06 1.98-1.95 1.98H6.54s-1.88-.03-1.88 1.82v3.05S4.37 15 8.07 15zm1.86-1.07c-.34 0-.61-.27-.61-.61s.27-.61.61-.61.61.27.61.61-.27.61-.61.61z"/></svg>
<div id="c_f1" class="a t" style="left:261.5px;top:1024.6px;font-size:27px;color:#0032A0;letter-spacing:-0.014px">abc_classes.py</div>
<div class="a" style="left:188px;top:1078px;width:24px;height:24px;border:2px solid #B9BDC9;border-radius:6px;background:#fff"></div>
<svg class="a" style="left:224px;top:1076px" width="32" height="32" viewBox="0 0 16 16" fill="none" ><path fill="url(#pyb)" d="M7.93 1C4.39 1 4.61 2.53 4.61 2.53l.004 1.59h3.38v.48H3.27S1 4.34 1 7.9c0 3.57 1.98 3.44 1.98 3.44h1.18V9.68s-.06-1.98 1.95-1.98h3.35s1.88.03 1.88-1.82V2.83S11.63 1 7.93 1zM6.07 2.07c.34 0 .61.27.61.61s-.27.61-.61.61-.61-.27-.61-.61.27-.61.61-.61z"/><path fill="url(#pyy)" d="M8.07 15c3.54 0 3.32-1.53 3.32-1.53l-.004-1.59H8.01v-.48h4.72S15 11.66 15 8.1c0-3.57-1.98-3.44-1.98-3.44h-1.18v1.66s.06 1.98-1.95 1.98H6.54s-1.88-.03-1.88 1.82v3.05S4.37 15 8.07 15zm1.86-1.07c-.34 0-.61-.27-.61-.61s.27-.61.61-.61.61.27.61.61-.27.61-.61.61z"/></svg>
<div id="c_f2" class="a t" style="left:261.5px;top:1072.6px;font-size:27px;color:#1F7208;letter-spacing:0.436px">calc.py</div>
<div class="a" style="left:188px;top:1126px;width:24px;height:24px;border:2px solid #B9BDC9;border-radius:6px;background:#fff"></div>
<svg class="a" style="left:224px;top:1124px" width="32" height="32" viewBox="0 0 16 16" fill="none" ><path fill="url(#pyb)" d="M7.93 1C4.39 1 4.61 2.53 4.61 2.53l.004 1.59h3.38v.48H3.27S1 4.34 1 7.9c0 3.57 1.98 3.44 1.98 3.44h1.18V9.68s-.06-1.98 1.95-1.98h3.35s1.88.03 1.88-1.82V2.83S11.63 1 7.93 1zM6.07 2.07c.34 0 .61.27.61.61s-.27.61-.61.61-.61-.27-.61-.61.27-.61.61-.61z"/><path fill="url(#pyy)" d="M8.07 15c3.54 0 3.32-1.53 3.32-1.53l-.004-1.59H8.01v-.48h4.72S15 11.66 15 8.1c0-3.57-1.98-3.44-1.98-3.44h-1.18v1.66s.06 1.98-1.95 1.98H6.54s-1.88-.03-1.88 1.82v3.05S4.37 15 8.07 15zm1.86-1.07c-.34 0-.61-.27-.61-.61s.27-.61.61-.61.61.27.61.61-.27.61-.61.61z"/></svg>
<div id="c_f3" class="a t" style="left:261.5px;top:1120.6px;font-size:27px;color:#1F7208;letter-spacing:0.346px">cases.py</div>
<div class="a" style="left:104px;top:1180px;width:24px;height:24px;border:2px solid #B9BDC9;border-radius:6px;background:#fff"></div>
<div id="c_amend" class="a t" style="left:145.5px;top:1175.2px;font-size:27px;color:#000;letter-spacing:0.050px">Amend</div>
<svg class="a" style="left:258px;top:1180px" width="32" height="32" viewBox="0 0 16 16" fill="none" ><circle cx="8" cy="8" r="6.200" stroke="#C0C5CC" stroke-width="1.500"/><path d="M8 4.700V8l2.100 1.700" stroke="#C0C5CC" stroke-width="1.500" stroke-linecap="round" stroke-linejoin="round"/></svg>
<div class="a" style="left:82px;top:1228px;width:468px;height:2px;background:#EBECF0;"></div>
<div class="a" style="left:94px;top:1230px;width:456px;height:162px;background:#fff;"></div>
<div class="a" style="left:82px;top:1392px;width:468px;height:66px;background:#fff;"></div>
<div id="c_msg" class="a m" style="left:93.7px;top:1232.8px">barking method updated</div>
<div class="a" style="left:94px;top:1398px;width:148px;height:44px;border:2px solid #C9CCD6;border-radius:9px;background:#fff"></div>
<div id="c_btn1" class="a t" style="left:122.5px;top:1403.2px;font-size:27px;color:#000;letter-spacing:0.240px">Commit</div>
<div class="a" style="left:258px;top:1398px;width:260px;height:44px;border:2px solid #C9CCD6;border-radius:9px;background:#fff"></div>
<div id="c_btn2" class="a t" style="left:285.8px;top:1403.2px;font-size:27px;color:#000;letter-spacing:0.300px;width:212px;overflow:hidden">Commit and Push...</div>
<div class="a" style="left:498px;top:1392px;width:52px;height:66px;background:#fff;"></div>
<svg class="a" style="left:508.0px;top:1406.0px" width="32" height="32" viewBox="0 0 20 20" fill="none" ><path d="M7.96 2.62Q8.47 1.75 9.47 1.75L10.53 1.75Q11.53 1.75 12.04 2.62L12.70 3.76Q13.15 4.54 14.05 4.54L15.38 4.54Q16.38 4.55 16.88 5.41L17.41 6.34Q17.91 7.20 17.41 8.07L16.75 9.22Q16.30 10.00 16.75 10.78L17.41 11.93Q17.91 12.80 17.41 13.66L16.88 14.59Q16.38 15.45 15.38 15.46L14.05 15.46Q13.15 15.46 12.70 16.24L12.04 17.38Q11.53 18.25 10.53 18.25L9.47 18.25Q8.47 18.25 7.96 17.38L7.30 16.24Q6.85 15.46 5.95 15.46L4.62 15.46Q3.62 15.45 3.12 14.59L2.59 13.66Q2.09 12.80 2.59 11.93L3.25 10.78Q3.70 10.00 3.25 9.22L2.59 8.07Q2.09 7.20 2.59 6.34L3.12 5.41Q3.62 4.55 4.62 4.54L5.95 4.54Q6.85 4.54 7.30 3.76z" stroke="#6C707E" stroke-width="1.2" stroke-linecap="round" stroke-linejoin="round"/><circle cx="10" cy="10" r="2.800" stroke="#6C707E" stroke-width="1.2" stroke-linecap="round" stroke-linejoin="round"/></svg>
<div class="a" style="left:552px;top:82px;width:1530px;height:1376px;background:#fff;"></div>
<svg class="a" style="left:576px;top:106px" width="32" height="32" viewBox="0 0 16 16" fill="none" ><path fill="url(#pyb)" d="M7.93 1C4.39 1 4.61 2.53 4.61 2.53l.004 1.59h3.38v.48H3.27S1 4.34 1 7.9c0 3.57 1.98 3.44 1.98 3.44h1.18V9.68s-.06-1.98 1.95-1.98h3.35s1.88.03 1.88-1.82V2.83S11.63 1 7.93 1zM6.07 2.07c.34 0 .61.27.61.61s-.27.61-.61.61-.61-.27-.61-.61.27-.61.61-.61z"/><path fill="url(#pyy)" d="M8.07 15c3.54 0 3.32-1.53 3.32-1.53l-.004-1.59H8.01v-.48h4.72S15 11.66 15 8.1c0-3.57-1.98-3.44-1.98-3.44h-1.18v1.66s.06 1.98-1.95 1.98H6.54s-1.88-.03-1.88 1.82v3.05S4.37 15 8.07 15zm1.86-1.07c-.34 0-.61-.27-.61-.61s.27-.61.61-.61.61.27.61.61-.27.61-.61.61z"/></svg>
<div id="e_tab" class="a t" style="left:616.0px;top:102.4px;font-size:27px;color:#000;letter-spacing:0.168px">async.py</div>
<svg class="a" style="left:748px;top:114px" width="16" height="16" viewBox="0 0 16 16" fill="none" ><path d="M1.700 1.700l12.600 12.600M14.300 1.700L1.700 14.300" stroke="#A8ADBD" stroke-width="2" stroke-linecap="round"/></svg>
<svg class="a" style="left:2039px;top:102px" width="10" height="40" viewBox="0 0 10 40" fill="none" ><circle cx="5" cy="9.8" r="2.3" fill="#6C707E"/><circle cx="5" cy="20.0" r="2.3" fill="#6C707E"/><circle cx="5" cy="30.2" r="2.3" fill="#6C707E"/></svg>
<div class="a" style="left:552px;top:162px;width:1530px;height:2px;background:#EBECF0;"></div>
<div class="a" style="left:552px;top:158px;width:236px;height:6px;background:#3F74EE;border-radius:3px"></div>
<div class="a" style="left:552px;top:164px;width:1530px;height:1246px;overflow:hidden">
<div class="a" style="left:0px;top:460px;width:1530px;height:44px;background:#F6F8FD;"></div>
<div class="a" style="left:96px;top:0px;width:2px;height:1246px;background:#EBECF0;"></div>
<div class="a" style="left:162px;top:284px;width:2px;height:132px;background:#E4E5EA;"></div>
<div class="a" style="left:162px;top:724px;width:2px;height:132px;background:#E4E5EA;"></div>
<div class="a" style="left:166px;top:196px;width:16px;height:44px;background:#F9E9F4;"></div>
<div class="a" style="left:230px;top:372px;width:16px;height:44px;background:#F9E9F4;"></div>
<div class="a" style="left:870px;top:416px;width:16px;height:44px;background:#EDEBFC;"></div>
<div class="a" style="left:278px;top:460px;width:16px;height:44px;background:#EDEBFC;"></div>
<div class="a ln" style="left:-1px;top:-21.5px">1</div>
<div class="a m" style="left:102.2px;top:-21.5px"><span class="k">import</span> asyncio</div>
<div class="a ln" style="left:-1px;top:22.5px">2</div>
<div class="a ln" style="left:-1px;top:66.5px">3</div>
<div class="a ln" style="left:-1px;top:154.5px">4</div>
<div class="a m" style="left:102.2px;top:154.5px"><span class="k">async</span> <span class="k">def</span> <span class="f">factorial</span>(name, number):</div>
<div class="a ln" style="left:-1px;top:198.5px">5</div>
<div class="a m" style="left:102.2px;top:198.5px">    f = <span class="n">1</span></div>
<div class="a ln" style="left:-1px;top:242.5px">6</div>
<div class="a m" style="left:102.2px;top:242.5px">    <span class="k">for</span> i <span class="k">in</span> <span class="b">range</span>(<span class="n">2</span>, number + <span class="n">1</span>):</div>
<div class="a ln" style="left:-1px;top:286.5px">7</div>
<div class="a m" style="left:102.2px;top:286.5px">        <span class="b">print</span>(<span class="s">f"Task </span><span class="c">{</span>name<span class="c">}</span><span class="s">: Compute factorial(</span><span class="c">{</span>number<span class="c">}</span><span class="s">), currently i=</span><span class="c">{</span>i<span class="c">}</span><span class="s">..."</span>)</div>
<div class="a ln" style="left:-1px;top:330.5px">8</div>
<div class="a m" style="left:102.2px;top:330.5px">        <span class="k">await</span> asyncio.sleep(<span class="n">1</span>)</div>
<div class="a ln" style="left:-1px;top:374.5px">9</div>
<div class="a m" style="left:102.2px;top:374.5px">        f *= i</div>
<div class="a ln" style="left:-1px;top:418.5px">10</div>
<div class="a m" style="left:102.2px;top:418.5px">    <span class="b">print</span>(<span class="s">f"Task </span><span class="c">{</span>name<span class="c">}</span><span class="s">: factorial(</span><span class="c">{</span>number<span class="c">}</span><span class="s">) = </span><span class="c">{</span>f<span class="c">}</span><span class="s">"</span>)</div>
<div class="a ln" style="left:-1px;top:462.5px;color:#767A8A">11</div>
<div class="a m" style="left:102.2px;top:462.5px">    <span class="k">return</span> f</div>
<div class="a ln" style="left:-1px;top:506.5px">12</div>
<div class="a ln" style="left:-1px;top:550.5px">13</div>
<div class="a ln" style="left:-1px;top:638.5px">14</div>
<div class="a m" style="left:102.2px;top:638.5px"><span class="k">async</span> <span class="k">def</span> <span class="f">main</span>():</div>
<div class="a ln" style="left:-1px;top:682.5px">15</div>
<div class="a m" style="left:102.2px;top:682.5px">    var = <span class="k">await</span> asyncio.gather(</div>
<div class="a ln" style="left:-1px;top:726.5px">16</div>
<div class="a m" style="left:102.2px;top:726.5px">        factorial(<span class="s">"A"</span>, <span class="n">2</span>),</div>
<div class="a ln" style="left:-1px;top:770.5px">17</div>
<div class="a m" style="left:102.2px;top:770.5px">        factorial(<span class="s">"B"</span>, <span class="n">3</span>),</div>
<div class="a ln" style="left:-1px;top:814.5px">18</div>
<div class="a m" style="left:102.2px;top:814.5px">        factorial(<span class="s">"C"</span>, <span class="n">4</span>),</div>
<div class="a ln" style="left:-1px;top:858.5px">19</div>
<div class="a m" style="left:102.2px;top:858.5px">    )</div>
<div class="a ln" style="left:-1px;top:902.5px">20</div>
<div class="a m" style="left:102.2px;top:902.5px">    <span class="b">print</span>(var)</div>
<div class="a ln" style="left:-1px;top:946.5px">21</div>
<div class="a ln" style="left:-1px;top:990.5px">22</div>
<div class="a m" style="left:102.2px;top:990.5px">asyncio.run(main())</div>
<div class="a ln" style="left:-1px;top:1034.5px">23</div>
</div>
<div class="a" style="left:845px;top:628px;width:4px;height:36px;background:#000;"></div>
<svg class="a" style="left:670px;top:624px" width="24" height="34" viewBox="0 0 24 34" fill="none" ><path d="M12 1.500a10 10 0 0 0-6.200 17.850c.9.750 1.400 1.600 1.400 2.650h9.600c0-1.050.5-1.900 1.400-2.650A10 10 0 0 0 12 1.500z" fill="#F2AF3A"/><path d="M7.600 25.500h8.800M8.800 29.500h6.400" stroke="#6C707E" stroke-width="2"/></svg>
<div id="h1a" class="a t" style="left:654.0px;top:275.0px;font-size:25px;color:#808080;letter-spacing:0.173px">3 usages</div>
<svg class="a" style="left:786px;top:288.5px" width="16" height="14" viewBox="0 0 16 14" fill="none" ><circle cx="8" cy="3.600" r="3.400" fill="#A9B2BD"/><path d="M.5 13.500c.400-3.200 3.400-4.500 7.500-4.500s7.100 1.300 7.500 4.500z" fill="#A9B2BD"/></svg>
<div id="h1b" class="a t" style="left:809.5px;top:275.0px;font-size:25px;color:#808080;letter-spacing:0.182px">Denis Mashutin</div>
<div id="h2a" class="a t" style="left:654.0px;top:759.0px;font-size:25px;color:#808080;letter-spacing:-0.500px">1 usage</div>
<svg class="a" style="left:768px;top:772.5px" width="16" height="14" viewBox="0 0 16 14" fill="none" ><circle cx="8" cy="3.600" r="3.400" fill="#A9B2BD"/><path d="M.5 13.500c.400-3.200 3.400-4.500 7.500-4.500s7.100 1.300 7.500 4.500z" fill="#A9B2BD"/></svg>
<div id="h2b" class="a t" style="left:791.5px;top:759.0px;font-size:25px;color:#808080;letter-spacing:-0.000px">Denis Mashutin +1</div>
<svg class="a" style="left:2040px;top:176px" width="32" height="26" viewBox="0 0 32 26" fill="none" ><path d="M8.400 9.300L4.500 13.100 13.400 21.900 27.200 7.700 23.500 4.100 13.400 14.400z" fill="#6AA570"/></svg>
<div class="a" style="left:2054px;top:414px;width:28px;height:4px;background:#ECA9D6;"></div>
<div class="a" style="left:2054px;top:574px;width:28px;height:4px;background:#ECA9D6;"></div>
<div class="a" style="left:2054px;top:614px;width:28px;height:4px;background:#C9A6F5;"></div>
<div class="a" style="left:2054px;top:652px;width:28px;height:4px;background:#C9A6F5;"></div>
<div class="a" style="left:2062px;top:242px;width:14px;height:1118px;background:rgba(0,0,0,0.22);border-radius:7px"></div>
<div class="a" style="left:552px;top:1410px;width:1530px;height:2px;background:#EBECF0;"></div>
<div id="e_bc" class="a t" style="left:571.5px;top:1414.7px;font-size:27px;color:#6C707E;letter-spacing:0.597px">async factorial()</div>
</div>
</body></html>
